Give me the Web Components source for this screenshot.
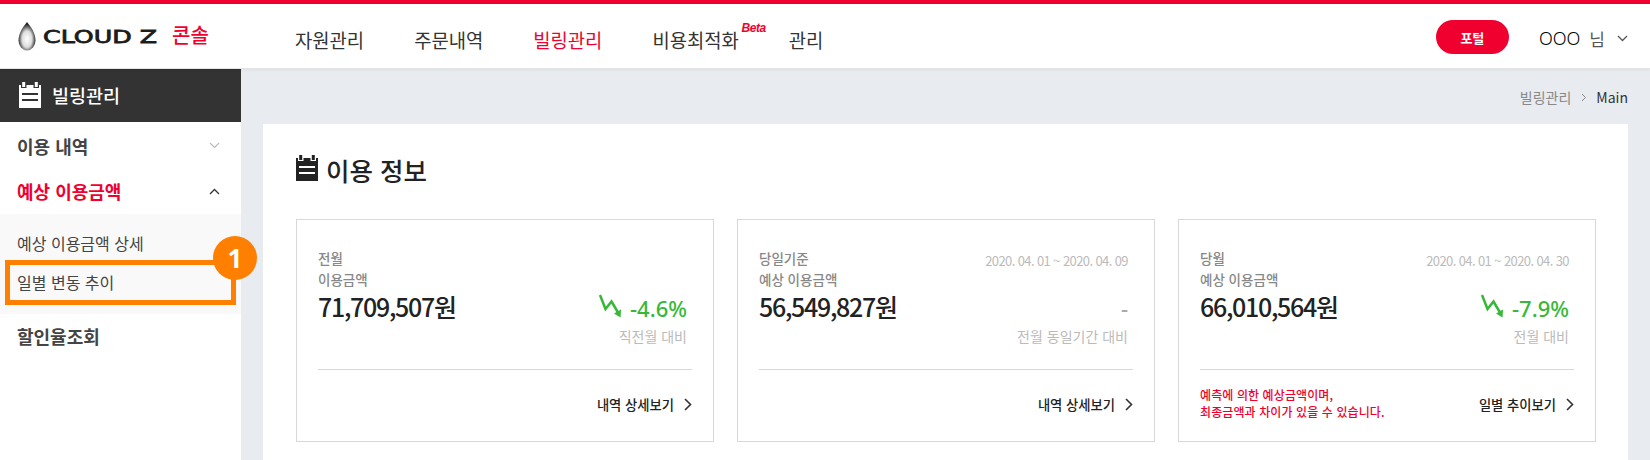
<!DOCTYPE html>
<html lang="ko">
<head>
<meta charset="utf-8">
<title>빌링관리</title>
<style>
    html, body { margin: 0; height: 460px; overflow: hidden; }
    body {
        font-family: "Noto Sans CJK KR", "Noto Sans", sans-serif;
        color: #333;
        background: #e8ebf0;
    }
</style>
</head>
<body>
<cz-header></cz-header>
<cz-shell>
    <cz-sidebar slot="side"></cz-sidebar>
    <cz-crumb></cz-crumb>
    <cz-panel heading="이용 정보">
        <cz-card line1="전월" line2="이용금액" amount="71,709,507원" rate="-4.6%" compare="직전월 대비" link="내역 상세보기"></cz-card>
        <cz-card line1="당일기준" line2="예상 이용금액" period="2020. 04. 01 ~ 2020. 04. 09" amount="56,549,827원" compare="전월 동일기간 대비" link="내역 상세보기"></cz-card>
        <cz-card line1="당월" line2="예상 이용금액" period="2020. 04. 01 ~ 2020. 04. 30" amount="66,010,564원" rate="-7.9%" compare="전월 대비" link="일별 추이보기">
            예측에 의한 예상금액이며,<br>최종금액과 차이가 있을 수 있습니다.
        </cz-card>
    </cz-panel>
</cz-shell>

<script>
const calendarPath = 'M0 3h2v3h5.500V3h7v3h5.500V3h2v23H0zM3 11v2h16v-2zM3 17v2h16v-2zM3.200 0h3v5h-3zM15.800 0h3v5h-3z';

class CzCalendar extends HTMLElement {
    constructor() {
        super();
        this.attachShadow({ mode: 'open' }).innerHTML = `
            <style>
                :host { display: block; width: 22px; height: 26px; }
                svg { display: block; width: 100%; height: 100%; fill: currentColor; }
            </style>
            <svg viewBox="0 0 22 26"><path fill-rule="evenodd" d="${calendarPath}"/></svg>
        `;
    }
}

class CzHeader extends HTMLElement {
    constructor() {
        super();
        this.attachShadow({ mode: 'open' }).innerHTML = `
            <style>
                :host {
                    display: flex;
                    align-items: center;
                    position: relative;
                    z-index: 2;
                    box-sizing: border-box;
                    height: 69px;
                    background: #fff;
                    border-top: 4px solid #f0002e;
                    border-bottom: 1px solid #e4e4e4;
                    box-shadow: 0 1px 3px rgba(0, 0, 0, .06);
                    padding: 0 22px 0 18px;
                }
                .logo { display: flex; align-items: center; width: 277px; flex: none; }
                .logo svg.drop { width: 18px; height: 29px; margin-right: 7px; }
                .logo svg.word { width: 116px; height: 24px; margin-right: 13px; }
                .logo b { font-size: 20px; font-weight: 500; color: #f0002e; position: relative; top: -2px; }
                nav { display: flex; gap: 50px; font-size: 18.800px; color: #333; padding-top: 6px; }
                nav a { position: relative; }
                nav a.on { color: #f0002e; }
                nav sup {
                    position: absolute;
                    left: 89px;
                    top: -5px;
                    font: italic 700 12px "Liberation Sans", sans-serif;
                    letter-spacing: -.4px;
                    color: #f0002e;
                }
                .right { margin-left: auto; display: flex; align-items: center; }
                .portal {
                    width: 73px; height: 34px; border-radius: 17px;
                    background: #f0002e; color: #fff;
                    font-size: 13px; font-weight: 700;
                    display: flex; align-items: center; justify-content: center;
                    margin: 2px 30px 0 0;
                }
                .user { font-size: 17px; color: #555; display: flex; align-items: center; padding-top: 4px; }
                .user i { font: 300 18px "Noto Sans", sans-serif; font-style: normal; color: #000; margin-right: 9px; }
                .user svg { width: 11px; height: 7px; margin-left: 12px; }
            </style>
            <div class="logo">
                <svg class="drop" viewBox="0 0 18 29">
                    <defs>
                        <radialGradient id="dg" cx="50%" cy="60%" r="52%">
                            <stop offset="0" stop-color="#fff"/>
                            <stop offset=".55" stop-color="#ddd"/>
                            <stop offset="1" stop-color="#222"/>
                        </radialGradient>
                    </defs>
                    <path d="M9 0C5 5 .5 11 .5 18.5A8.5 10 0 0 0 17.500 18.500C17.500 11 13 5 9 0z" fill="url(#dg)"/>
                </svg>
                <svg class="word" viewBox="0 0 116 24">
                    <text x="0" y="19" textLength="114" lengthAdjust="spacingAndGlyphs"
                        font-family="DejaVu Sans" font-size="18.500" fill="#1c1c1c" stroke="#1c1c1c" stroke-width=".8">CLOUD Z</text>
                </svg>
                <b>콘솔</b>
            </div>
            <nav>
                <a>자원관리</a>
                <a>주문내역</a>
                <a class="on">빌링관리</a>
                <a>비용최적화<sup>Beta</sup></a>
                <a>관리</a>
            </nav>
            <div class="right">
                <div class="portal">포털</div>
                <div class="user">
                    <i>OOO</i> 님
                    <svg viewBox="0 0 11 7"><path d="M1 1l4.500 4.500L10 1" fill="none" stroke="#555" stroke-width="1.300"/></svg>
                </div>
            </div>
        `;
    }
}

class CzShell extends HTMLElement {
    constructor() {
        super();
        this.attachShadow({ mode: 'open' }).innerHTML = `
            <style>
                :host { display: grid; grid-template-columns: 241px 1fr; height: 391px; overflow: hidden; }
                main { min-width: 0; padding: 0 22px; }
            </style>
            <slot name="side"></slot>
            <main><slot></slot></main>
        `;
    }
}

class CzSidebar extends HTMLElement {
    constructor() {
        super();
        this.attachShadow({ mode: 'open' }).innerHTML = `
            <style>
                :host { display: block; background: #fff; position: relative; }
                h2 {
                    margin: 0; height: 53px; box-sizing: border-box;
                    background: #333; color: #fff;
                    display: flex; align-items: center; gap: 11px;
                    padding: 0 19px 2px;
                    font-size: 18.500px; font-weight: 500;
                }
                .item {
                    height: 46px; padding: 0 17px;
                    display: flex; align-items: center; justify-content: space-between;
                    font-size: 18px; font-weight: 700; color: #444;
                }
                .item.first { height: 45px; padding-top: 1px; }
                .item.last { height: 44px; }
                .item.on { color: #f0002e; }
                .item svg { width: 11px; height: 7px; margin-right: 4px; }
                .sub { background: #f9f9f9; padding: 9px 0 13px; }
                .sub div {
                    position: relative;
                    height: 39px; padding: 0 17px;
                    display: flex; align-items: center;
                    font-size: 16px; color: #444;
                }
                .mark {
                    position: absolute; top: -2px; left: 5px; right: 5px; bottom: -4px;
                    border: 5px solid #ff7f00;
                }
                .badge {
                    position: absolute; top: -26px; left: 213px;
                    width: 44px; height: 44px; border-radius: 50%;
                    background: #ff7f00; color: #fff;
                    font: 700 26px "Noto Sans", sans-serif;
                    display: flex; align-items: center; justify-content: center;
                    z-index: 3;
                }
            </style>
            <h2><cz-calendar></cz-calendar>빌링관리</h2>
            <div class="item first">이용 내역
                <svg viewBox="0 0 11 7"><path d="M1 1l4.500 4.500L10 1" fill="none" stroke="#bbb" stroke-width="1.200"/></svg>
            </div>
            <div class="item on">예상 이용금액
                <svg viewBox="0 0 11 7"><path d="M1 6l4.500-4.500L10 6" fill="none" stroke="#333" stroke-width="1.300"/></svg>
            </div>
            <div class="sub">
                <div>예상 이용금액 상세</div>
                <div>일별 변동 추이<span class="mark"></span><span class="badge">1</span></div>
            </div>
            <div class="item last">할인율조회</div>
        `;
    }
}

class CzCrumb extends HTMLElement {
    constructor() {
        super();
        this.attachShadow({ mode: 'open' }).innerHTML = `
            <style>
                :host {
                    display: flex; align-items: center; justify-content: flex-end;
                    height: 55px; font-size: 14px; color: #888;
                }
                svg { width: 6px; height: 9px; margin: 2px 9px 0 10px; }
                span { color: #333; }
            </style>
            빌링관리
            <svg viewBox="0 0 6 9"><path d="M1 1l3.500 3.500L1 8" fill="none" stroke="#888"/></svg>
            <span>Main</span>
        `;
    }
}

class CzPanel extends HTMLElement {
    constructor() {
        super();
        this.attachShadow({ mode: 'open' }).innerHTML = `
            <style>
                :host {
                    display: block; background: #fff; height: 400px;
                    box-sizing: border-box; padding: 28px 33px 0;
                }
                h1 {
                    margin: 0 0 31px; height: 36px;
                    display: flex; align-items: center; gap: 8px;
                    font-size: 25.500px; font-weight: 500; color: #222;
                }
                h1 span { position: relative; top: -1px; }
                h1 cz-calendar { position: relative; top: -2px; }
                .cards { display: grid; grid-template-columns: repeat(3, 418px); gap: 23px; }
            </style>
            <h1><cz-calendar></cz-calendar><span></span></h1>
            <div class="cards"><slot></slot></div>
        `;
        this.shadowRoot.querySelector('span').textContent = this.getAttribute('heading');
    }
}

class CzCard extends HTMLElement {
    connectedCallback() {
        const a = n => this.getAttribute(n) || '';
        const rate = a('rate');
        this.attachShadow({ mode: 'open' }).innerHTML = `
            <style>
                :host {
                    display: flex; flex-direction: column;
                    box-sizing: border-box; height: 223px;
                    border: 1.500px solid #d8d8d8; background: #fff;
                    padding: 28px 21px 0;
                }
                .top { display: flex; justify-content: space-between; height: 21px; line-height: 21px; font-size: 13.500px; font-weight: 500; color: #888; }
                .period { font-weight: 400; color: #bbb; font-size: 13px; letter-spacing: -.6px; padding: 2px 5px 0 0; }
                .mid { display: flex; justify-content: space-between; align-items: flex-start; height: 33px; }
                .amount { font-size: 25px; line-height: 33px; font-weight: 500; color: #222; letter-spacing: -1.300px; }
                .rate { display: flex; align-items: center; gap: 6px; height: 33px; margin-top: 1px; font: 500 22px "Noto Sans", sans-serif; color: #38b838; padding-right: 5px; }
                .rate.none { color: #aaa; }
                .rate svg { width: 26px; height: 26px; margin-top: -3px; }
                .compare { text-align: right; font-size: 14px; color: #bbb; height: 24px; line-height: 24px; margin-top: 1px; padding-right: 5px; }
                hr { margin: 21px 0 0; border: 0; border-top: 1px solid #d8d8d8; width: 100%; }
                .bottom { flex: 1; display: flex; justify-content: space-between; align-items: center; padding-bottom: 2px; }
                .note { font-size: 12px; line-height: 17px; font-weight: 500; color: #f0002e; letter-spacing: .1px; margin-bottom: 4px; }
                .link { display: flex; align-items: center; gap: 10px; font-size: 13.300px; font-weight: 500; color: #222; margin-left: auto; }
                .link svg { width: 8px; height: 13px; }
            </style>
            <div class="top"><span>${a('line1')}</span><span class="period">${a('period')}</span></div>
            <div class="top">${a('line2')}</div>
            <div class="mid">
                <div class="amount">${a('amount')}</div>
                <div class="rate ${rate ? '' : 'none'}">${rate ? `
                    <svg viewBox="0 0 26 26"><path d="M2 2l5.500 14 6-7.500 6.500 11" fill="none" stroke="#38b838" stroke-width="2.500"/><path d="M16 20.500l7-4-.5 8z" fill="#38b838"/></svg>
                    <span>${rate}</span>` : '-'}</div>
            </div>
            <div class="compare">${a('compare')}</div>
            <hr>
            <div class="bottom">
                <div class="note"><slot></slot></div>
                <div class="link">${a('link')}
                    <svg viewBox="0 0 8 13"><path d="M1 1l5.500 5.500L1 12" fill="none" stroke="#333" stroke-width="1.600"/></svg>
                </div>
            </div>
        `;
    }
}

customElements.define('cz-calendar', CzCalendar);
customElements.define('cz-header', CzHeader);
customElements.define('cz-shell', CzShell);
customElements.define('cz-sidebar', CzSidebar);
customElements.define('cz-crumb', CzCrumb);
customElements.define('cz-panel', CzPanel);
customElements.define('cz-card', CzCard);
</script>
</body>
</html>
